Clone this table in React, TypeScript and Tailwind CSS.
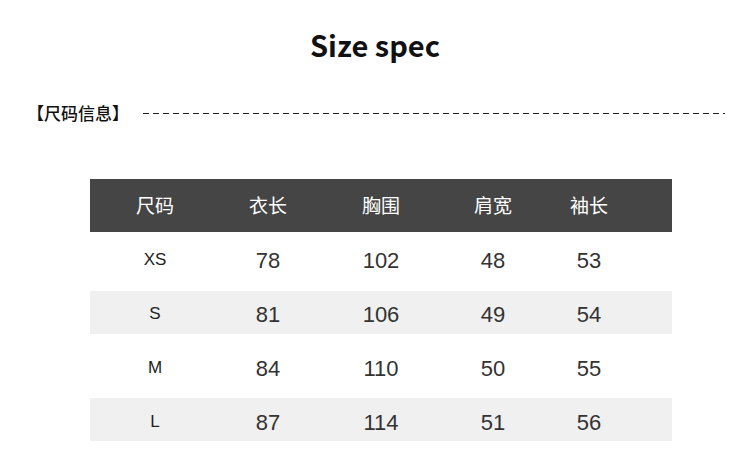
import React from 'react';

type SizeRow = {
  size: string;
  length: number;
  chest: number;
  shoulder: number;
  sleeve: number;
  style: string;
};

const headers = ['尺码', '衣长', '胸围', '肩宽', '袖长'];

// row heights differ a little in the original image, kept as measured
const rows: SizeRow[] = [
  { size: 'XS', length: 78, chest: 102, shoulder: 48, sleeve: 53, style: 'h-[59px] pb-[3px] bg-white' },
  { size: 'S', length: 81, chest: 106, shoulder: 49, sleeve: 54, style: 'h-[43px] pt-[3px] bg-[#f0f0f0]' },
  { size: 'M', length: 84, chest: 110, shoulder: 50, sleeve: 55, style: 'h-[64px] pt-[4px] bg-white' },
  { size: 'L', length: 87, chest: 114, shoulder: 51, sleeve: 56, style: 'h-[43px] pt-[5px] bg-[#f0f0f0]' },
];

const cjk = "font-['Noto_Sans_CJK_SC','Noto_Sans',sans-serif]";
const gridCols = 'grid grid-cols-[130px_96px_130px_94px_98px_1fr] items-center text-center';

export default function App() {
  return (
    <div className="w-[750px] h-[468px] bg-white overflow-hidden">
      <div className="h-[88px] flex items-center justify-center">
        <h1 className="font-['Noto_Sans_CJK_SC','Open_Sans',sans-serif] font-bold text-[29px] leading-[36px] text-[#111]">
          Size spec
        </h1>
      </div>

      <div className="h-[50px] flex items-center pl-[27px]">
        <span className={`${cjk} font-medium text-[17px] leading-[20px] text-[#111] w-[116px]`}>【尺码信息】</span>
        <svg width="582" height="3" className="block">
          <line x1="0" y1="1.5" x2="582" y2="1.5" stroke="#222" strokeWidth="1" strokeDasharray="6 4" />
        </svg>
      </div>

      <div className="mt-[41px] ml-[90px] w-[582px]">
        <div className={`${gridCols} h-[53px] bg-[#454545] text-white ${cjk} text-[19px]`}>
          {headers.map((h) => (
            <div key={h}>{h}</div>
          ))}
          <div />
        </div>
        {rows.map((r) => (
          <div key={r.size} className={`${gridCols} ${r.style} font-['Liberation_Sans',sans-serif] text-[#333]`}>
            <div className="text-[17px] text-[#222]">{r.size}</div>
            <div className="text-[22px]">{r.length}</div>
            <div className="text-[22px]">{r.chest}</div>
            <div className="text-[22px]">{r.shoulder}</div>
            <div className="text-[22px]">{r.sleeve}</div>
            <div />
          </div>
        ))}
      </div>
    </div>
  );
}
